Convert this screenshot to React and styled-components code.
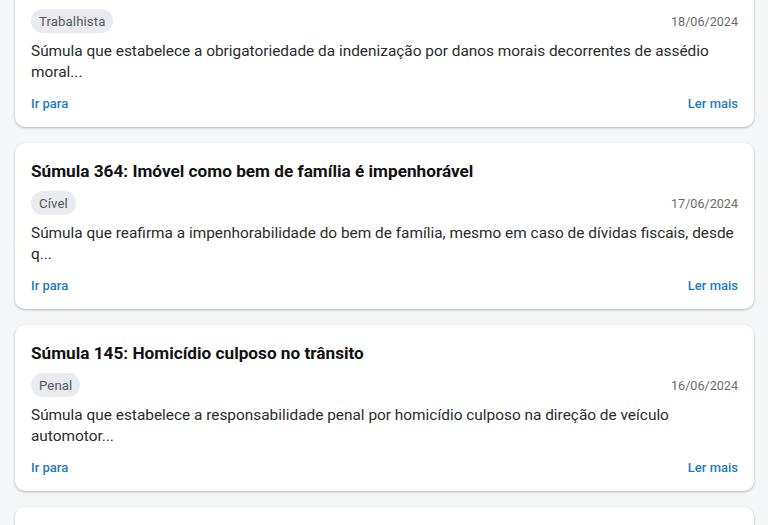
import React from "react";
import styled, { createGlobalStyle } from "styled-components";

const GlobalStyle = createGlobalStyle`
  html, body {
    margin: 0;
    padding: 0;
    background: #f5f6f8;
    font-family: Roboto, "Noto Sans", sans-serif;
    overflow: hidden;
  }
`;

const Page = styled.div`
  height: 525px;
  overflow: hidden;
  background: #f5f6f8;
`;

const List = styled.div`
  display: flex;
  flex-direction: column;
  gap: 16px;
  padding: 0 14px 0 15px;
  margin-top: -39px;
`;

const Card = styled.div`
  background: #ffffff;
  border-radius: 10px;
  box-shadow: 0 1px 3px rgba(0, 0, 0, 0.22), 0 1px 1px rgba(0, 0, 0, 0.06);
  padding: 16px 16px 13px;
  height: 166px;
  box-sizing: border-box;
  display: flex;
  flex-direction: column;
`;

const Title = styled.h3`
  margin: 0 0 8px;
  font-size: 17.2px;
  line-height: 24px;
  font-weight: 700;
  color: #111;
`;

const MetaRow = styled.div`
  display: flex;
  align-items: center;
  justify-content: space-between;
  margin-bottom: 8px;
`;

const Tag = styled.span`
  display: inline-flex;
  align-items: center;
  height: 24px;
  padding: 0 8px;
  border-radius: 12px;
  background: #e9ebee;
  color: #55595e;
  font-size: 13.2px;
  font-weight: 400;
  letter-spacing: 0.1px;
`;

const DateText = styled.span`
  font-size: 12.6px;
  color: #6b6b6b;
`;

const Description = styled.p`
  margin: 0;
  font-size: 15.4px;
  line-height: 21px;
  color: #2b2b2b;
  height: 42px;
`;

const Actions = styled.div`
  margin-top: auto;
  display: flex;
  justify-content: space-between;
  align-items: center;
`;

const LinkButton = styled.button`
  background: none;
  border: none;
  padding: 0;
  font-family: inherit;
  font-size: 13px;
  line-height: 20px;
  font-weight: 500;
  color: #1f7bbf;
  cursor: pointer;
`;

const items = [
  {
    title: "Súmula 228: Indenização por assédio moral",
    area: "Trabalhista",
    date: "18/06/2024",
    text: "Súmula que estabelece a obrigatoriedade da indenização por danos morais decorrentes de assédio moral...",
  },
  {
    title: "Súmula 364: Imóvel como bem de família é impenhorável",
    area: "Cível",
    date: "17/06/2024",
    text: "Súmula que reafirma a impenhorabilidade do bem de família, mesmo em caso de dívidas fiscais, desde q...",
  },
  {
    title: "Súmula 145: Homicídio culposo no trânsito",
    area: "Penal",
    date: "16/06/2024",
    text: "Súmula que estabelece a responsabilidade penal por homicídio culposo na direção de veículo automotor...",
  },
  {
    title: "Súmula 410: Prazo para recurso administrativo",
    area: "Administrativo",
    date: "15/06/2024",
    text: "Súmula que define o prazo para interposição de recurso administrativo...",
  },
];

const App = () => {
  return (
    <Page>
      <GlobalStyle />
      <List>
        {items.map((item) => (
          <Card key={item.title}>
            <Title>{item.title}</Title>
            <MetaRow>
              <Tag>{item.area}</Tag>
              <DateText>{item.date}</DateText>
            </MetaRow>
            <Description>{item.text}</Description>
            <Actions>
              <LinkButton>Ir para</LinkButton>
              <LinkButton>Ler mais</LinkButton>
            </Actions>
          </Card>
        ))}
      </List>
    </Page>
  );
};

export default App;
